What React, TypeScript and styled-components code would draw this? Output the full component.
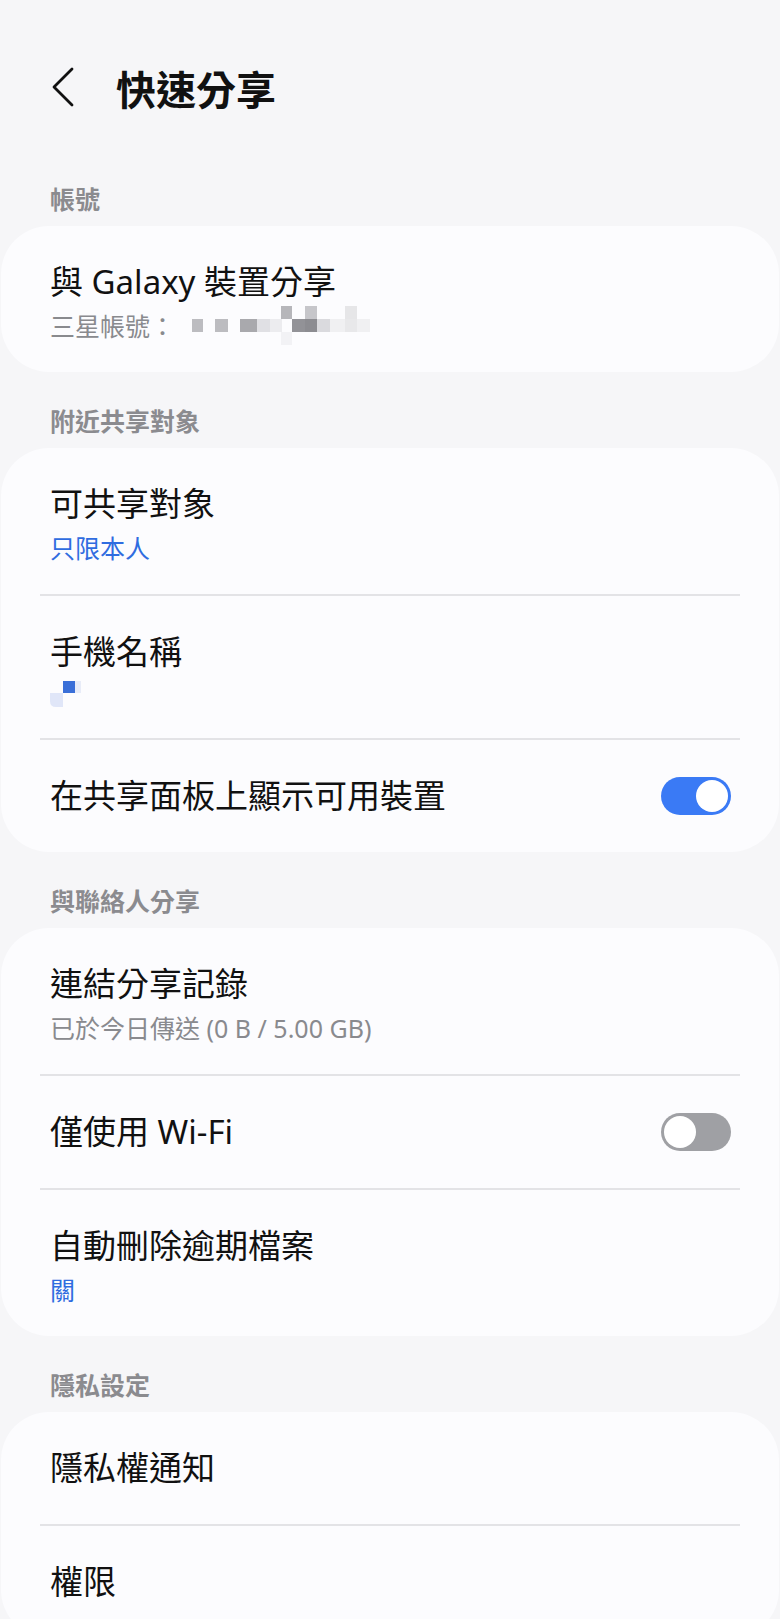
import styled, { createGlobalStyle } from "styled-components";

const GlobalStyle = createGlobalStyle`
  html, body {
    margin: 0;
    padding: 0;
    background: #f6f6f8;
  }
  body {
    font-family: "Noto Sans", "Noto Sans CJK TC", sans-serif;
    color: #111111;
    -webkit-font-smoothing: antialiased;
  }
`;

type Mosaic = { x: number; y: number; w: number; c: string }[];

const accountMosaic: Mosaic = [
  { x: 89, y: 0, w: 11, c: "#b6b6ba" },
  { x: 113, y: 0, w: 12, c: "#c6c6ca" },
  { x: 153, y: 0, w: 12, c: "#e6e6e8" },
  { x: 0, y: 13, w: 11, c: "#bcbcc0" },
  { x: 23, y: 13, w: 13, c: "#bcbcc0" },
  { x: 48, y: 13, w: 17, c: "#a9a9ad" },
  { x: 65, y: 13, w: 13, c: "#e0e0e4" },
  { x: 78, y: 13, w: 12, c: "#ececef" },
  { x: 100, y: 13, w: 13, c: "#929297" },
  { x: 113, y: 13, w: 12, c: "#8c8c91" },
  { x: 125, y: 13, w: 13, c: "#dadade" },
  { x: 138, y: 13, w: 15, c: "#f0f0f2" },
  { x: 153, y: 13, w: 12, c: "#e8e8ea" },
  { x: 165, y: 13, w: 13, c: "#f0f0f2" },
  { x: 89, y: 26, w: 11, c: "#f2f2f5" },
];

export default function App() {
  return (
    <Page>
      <GlobalStyle />
      <AppBar>
        <BackButton aria-label="返回">
          <svg width="24" height="40" viewBox="0 0 24 40">
            <polyline
              points="21,2 3,20 21,38"
              fill="none"
              stroke="#111"
              strokeWidth="2.8"
              strokeLinecap="round"
              strokeLinejoin="round"
            />
          </svg>
        </BackButton>
        <Title>快速分享</Title>
      </AppBar>

      <SectionHeader>帳號</SectionHeader>
      <Card>
        <Row $hasSub>
          <RowText>
            <RowTitle>與 Galaxy 裝置分享</RowTitle>
            <RowSub>
              三星帳號：
              <Blur width="180" height="40" viewBox="0 0 180 40">
                {accountMosaic.map((m, i) => (
                  <rect key={i} x={m.x} y={m.y} width={m.w} height={13} fill={m.c} />
                ))}
              </Blur>
            </RowSub>
          </RowText>
        </Row>
      </Card>

      <SectionHeader>附近共享對象</SectionHeader>
      <Card>
        <Row $hasSub>
          <RowText>
            <RowTitle>可共享對象</RowTitle>
            <RowSub $blue>只限本人</RowSub>
          </RowText>
        </Row>
        <Divider />
        <Row $hasSub>
          <RowText>
            <RowTitle>手機名稱</RowTitle>
            <NameSub>
              <svg width="40" height="27" viewBox="0 0 40 27">
                <rect x="13" y="0" width="12" height="12" fill="#3a6fd8" />
                <rect x="25" y="0" width="6" height="12" fill="#e8ecf8" />
                <path d="M0 12 H13 V26 H6 Q0 26 0 20 Z" fill="#e0e6f8" />
              </svg>
            </NameSub>
          </RowText>
        </Row>
        <Divider />
        <Row>
          <RowText>
            <RowTitle>在共享面板上顯示可用裝置</RowTitle>
          </RowText>
          <Switch $on />
        </Row>
      </Card>

      <SectionHeader>與聯絡人分享</SectionHeader>
      <Card>
        <Row $hasSub>
          <RowText>
            <RowTitle>連結分享記錄</RowTitle>
            <RowSub>已於今日傳送 (0 B / 5.00 GB)</RowSub>
          </RowText>
        </Row>
        <Divider />
        <Row>
          <RowText>
            <RowTitle>僅使用 Wi-Fi</RowTitle>
          </RowText>
          <Switch />
        </Row>
        <Divider />
        <Row $hasSub>
          <RowText>
            <RowTitle>自動刪除逾期檔案</RowTitle>
            <RowSub $blue>關</RowSub>
          </RowText>
        </Row>
      </Card>

      <SectionHeader>隱私設定</SectionHeader>
      <Card>
        <Row>
          <RowText>
            <RowTitle>隱私權通知</RowTitle>
          </RowText>
        </Row>
        <Divider />
        <Row>
          <RowText>
            <RowTitle>權限</RowTitle>
          </RowText>
        </Row>
      </Card>
    </Page>
  );
}

const Page = styled.div`
  width: 780px;
  min-height: 1619px;
  background: #f6f6f8;
  overflow: hidden;
`;

const AppBar = styled.div`
  height: 126px;
  padding-top: 24px;
  display: flex;
  align-items: center;
`;

const BackButton = styled.button`
  margin-left: 51px;
  width: 24px;
  height: 40px;
  padding: 0;
  border: none;
  background: none;
  display: flex;
  align-items: center;
`;

const Title = styled.h1`
  margin: 6px 0 0 41px;
  font-size: 40px;
  line-height: 48px;
  font-weight: 700;
  color: #111111;
`;

const SectionHeader = styled.div`
  padding: 33px 50px 11px;
  font-size: 25px;
  line-height: 32px;
  font-weight: 700;
  color: #8b8b8f;
`;

const Card = styled.div`
  margin: 0 1px;
  background: #fcfcfe;
  border-radius: 48px;
`;

const Row = styled.div<{ $hasSub?: boolean }>`
  display: flex;
  align-items: center;
  justify-content: space-between;
  padding: ${(p) => (p.$hasSub ? "36px 48px 30px 49px" : "36px 48px 36px 49px")};
`;

const RowText = styled.div`
  display: flex;
  flex-direction: column;
`;

const RowTitle = styled.div`
  font-size: 33px;
  line-height: 40px;
  color: #111111;
`;

const RowSub = styled.div<{ $blue?: boolean }>`
  margin-top: 8px;
  height: 32px;
  display: flex;
  align-items: center;
  font-size: 25px;
  line-height: 32px;
  color: ${(p) => (p.$blue ? "#2f6ce0" : "#898a8e")};
`;

const NameSub = styled.div`
  margin-top: 9px;
  height: 27px;
  svg {
    display: block;
  }
`;

const Blur = styled.svg`
  display: block;
  margin-left: 17px;
`;

const Divider = styled.div`
  margin: 0 39px;
  height: 2px;
  background: #e3e3e6;
`;

const Switch = styled.div<{ $on?: boolean }>`
  position: relative;
  width: 70px;
  height: 38px;
  border-radius: 19px;
  flex-shrink: 0;
  background: ${(p) => (p.$on ? "#3a7af5" : "#9fa0a4")};
  &::after {
    content: "";
    position: absolute;
    top: 3px;
    left: ${(p) => (p.$on ? "35px" : "3px")};
    width: 32px;
    height: 32px;
    border-radius: 50%;
    background: #ffffff;
  }
`;
